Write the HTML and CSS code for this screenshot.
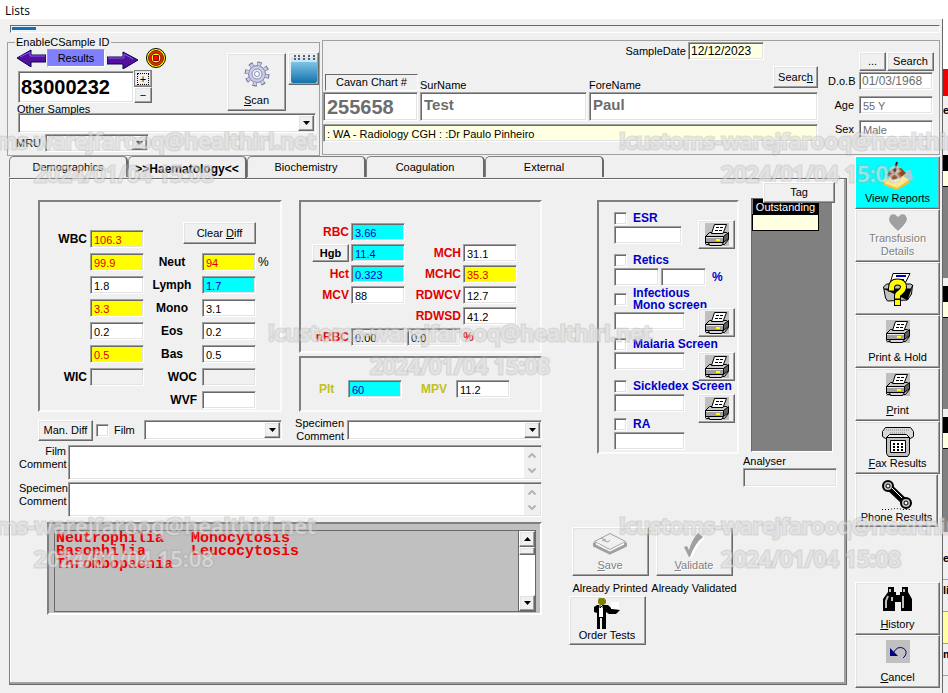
FILE: index.html
```html
<!DOCTYPE html>
<html lang="en">
<head>
<meta charset="utf-8">
<title>Lists</title>
<link rel="stylesheet" href="styles.css">
</head>
<body>
<svg class="defs" aria-hidden="true">
  <symbol id="printer" viewBox="0 0 24 23">
    <path fill="#c0c0c0" d="M0 0h24v23H0z"/>
    <path fill="#c8c8c8" stroke="#000" d="M4.500 9.500h17l2 2v5l-4 5h-18l-1-1v-7z"/>
    <path fill="#fff" stroke="#000" d="M9.500 1.500h12l-3.500 9h-11.500z"/>
    <path stroke="#000" d="M11 4.500h7M10 7.500h7" stroke-dasharray="3 1"/>
    <path fill="#a0a0a0" stroke="#000" d="M.5 13.500h18v6h-18z"/>
    <path fill="#e8e8e8" d="M1 14h17v1H1z"/>
    <path fill="#606060" stroke="#000" d="M18.500 13.500l5-4v6l-5 4z"/>
    <path fill="#d8d8d8" stroke="#000" d="M3.500 19.500h15l-2 3h-12z"/>
    <path fill="#ff0" d="M11 16h4v2h-4z"/>
  </symbol>
  <symbol id="down" viewBox="0 0 7 4"><path d="M0 0h7L3.500 4z"/></symbol>
  <symbol id="chev" viewBox="0 0 8 5"><path d="M0.500 4.500L4 1l3.500 3.500" fill="none" stroke="#b4b4b4" stroke-width="2"/></symbol>
</svg>

<header class="menubar">Lists</header>

<div class="screen">
  <div class="window">
    <div class="progress"><div class="progress-bar"></div></div>

    <div class="header">
      <fieldset class="frame sample">
        <legend>EnableCSample ID</legend>
        <div class="sample-top">
          <div class="sample-id">
            <div class="nav">
              <svg width="29" height="18" viewBox="0 0 29 18"><path d="M0 9L14 1v5h15v7H14v5z" fill="#52109c" stroke="#0a004c" stroke-width="1"/><path d="M3 8l10-5v4h15" fill="none" stroke="#8a5cff"/></svg>
              <span class="results">Results</span>
              <svg class="nav-right" width="31" height="18" viewBox="0 0 31 18"><path d="M31 9L16 1v5H0v7h16v5z" fill="#52109c" stroke="#0a004c" stroke-width="1"/><path d="M1 7h16V3l9 5" fill="none" stroke="#8a5cff"/></svg>
              <svg width="20" height="20" viewBox="0 0 20 20"><circle cx="10" cy="10" r="9.500" fill="#ff0" stroke="#000"/><circle cx="10" cy="10" r="7.500" fill="#e83000" stroke="#802000" stroke-width="1"/><circle cx="10" cy="10" r="5" fill="#ff0" stroke="#600"/><path d="M7.500 7.500h5v5h-5z" fill="#f00" stroke="#800"/></svg>
            </div>
            <div class="id-row">
              <input class="field id-input" aria-label="Sample ID" value="83000232">
              <div class="spin">
                <button class="btn"><span class="focus">+</span></button>
                <button class="btn">−</button>
              </div>
            </div>
            <label class="other" for="other">Other Samples</label>
          </div>
          <button class="btn stack scan">
            <svg width="26" height="26" viewBox="0 0 26 26"><circle cx="13" cy="13" r="10" fill="none" stroke="#6f7396" stroke-width="5" stroke-dasharray="4 3.850"/><circle cx="13" cy="13" r="8.500" fill="#c9cce4" stroke="#7a7ea4"/><circle cx="13" cy="13" r="10" fill="none" stroke="#c9cce4" stroke-width="3" stroke-dasharray="3 4.850" stroke-dashoffset="-.5"/><circle cx="13" cy="13" r="5" fill="#eef0fa" stroke="#8a8eb4"/><circle cx="13" cy="13" r="2.500" fill="#fff" stroke="#8a8eb4"/></svg>
            <span><u>S</u>can</span>
          </button>
          <button class="btn calendar" aria-label="Calendar">
            <svg width="28" height="30" viewBox="0 0 28 30"><defs><linearGradient id="blue" x2="0" y2="1"><stop offset="0" stop-color="#8ed0ee"/><stop offset="1" stop-color="#1272ac"/></linearGradient></defs><path fill="url(#blue)" d="M1 5h26v22q0 2-2 2H3q-2 0-2-2z"/><path fill="#c8e8f6" d="M1 3h26v5H1z"/><path d="M5 1v6M9 1v6M14 1v6M19 1v6M24 1v6" stroke="#56616a" stroke-width="2" stroke-dasharray="2 1"/></svg>
          </button>
        </div>
        <div class="combo other-combo"><select id="other"><option></option></select><span class="btn arrow"><svg width="7" height="4"><use href="#down"/></svg></span></div>
        <div class="mru"><label for="mru">MRU</label><div class="combo"><select id="mru"><option></option></select><span class="btn arrow"><svg width="7" height="4"><use href="#down"/></svg></span></div></div>
      </fieldset>

      <section class="frame patient">
        <div class="identity">
          <div class="date-row"><label for="sdate">SampleDate</label><input class="field cream date" id="sdate" value="12/12/2023"></div>
          <div class="names">
            <label class="chart-label" for="chart">Cavan Chart #</label>
            <label for="sur">SurName</label>
            <div class="fore-head"><label for="fore">ForeName</label><button class="btn">Searc<u>h</u></button></div>
            <input class="field chart" id="chart" value="255658">
            <input class="field name" id="sur" value="Test">
            <input class="field name" id="fore" value="Paul">
          </div>
          <input class="field cream ward" aria-label="Ward and clinician" value=": WA - Radiology CGH : :Dr Paulo Pinheiro">
        </div>
        <div class="demo">
          <div class="demo-buttons"><button class="btn">...</button><button class="btn">Search</button></div>
          <label for="dob">D.o.B</label><input class="field date" id="dob" value="01/03/1968">
          <label for="age">Age</label><input class="field" id="age" value="55 Y">
          <label for="sex">Sex</label><input class="field" id="sex" value="Male">
        </div>
      </section>
    </div>

    <div class="work">
      <main class="main">
        <nav class="tabs">
          <button class="tab">Demographics</button>
          <button class="tab selected">&gt;&gt;Haematology&lt;&lt;</button>
          <button class="tab">Biochemistry</button>
          <button class="tab">Coagulation</button>
          <button class="tab">External</button>
        </nav>
        <div class="panel">
          <div class="results-col">
            <div class="groups">
              <section class="group wbc">
                <div class="wbc-col">
                  <label for="wbc">WBC</label><input class="field high" id="wbc" value="106.3">
                  <input class="field high" aria-label="Neutrophils" value="99.9">
                  <input class="field" aria-label="Lymphocytes" value="1.8">
                  <input class="field high" aria-label="Monocytes" value="3.3">
                  <input class="field" aria-label="Eosinophils" value="0.2">
                  <input class="field high" aria-label="Basophils" value="0.5">
                  <label for="wic">WIC</label><input class="field grey" id="wic">
                </div>
                <div class="diff-col">
                  <button class="btn clear"><span>Clear <u>D</u>iff</span></button>
                  <label for="neut">Neut</label><input class="field high" id="neut" value="94"><span>%</span>
                  <label for="lymph">Lymph</label><input class="field low" id="lymph" value="1.7">
                  <label for="mono">Mono</label><input class="field" id="mono" value="3.1">
                  <label for="eos">Eos</label><input class="field" id="eos" value="0.2">
                  <label for="bas">Bas</label><input class="field" id="bas" value="0.5">
                  <label class="end" for="woc">WOC</label><input class="field grey" id="woc">
                  <label class="end" for="wvf">WVF</label><input class="field" id="wvf">
                </div>
              </section>
              <div class="red-col">
                <section class="group rbc">
                  <label for="rbc">RBC</label><input class="field low" id="rbc" value="3.66">
                  <button class="btn hgb">Hgb</button><input class="field low" aria-label="Hgb" value="11.4"><label for="mch">MCH</label><input class="field" id="mch" value="31.1">
                  <label class="c1" for="hct">Hct</label><input class="field low" id="hct" value="0.323"><label for="mchc">MCHC</label><input class="field high" id="mchc" value="35.3">
                  <label class="c1" for="mcv">MCV</label><input class="field" id="mcv" value="88"><label for="rdwcv">RDWCV</label><input class="field" id="rdwcv" value="12.7">
                  <label class="c3" for="rdwsd">RDWSD</label><input class="field" id="rdwsd" value="41.2">
                  <label class="c1" for="nrbc">nRBC</label><input class="field grey" id="nrbc" value="0.00"><input class="field grey" aria-label="nRBC percent" value="0.0"><span class="pct">%</span>
                </section>
                <section class="group plt">
                  <label for="plt">Plt</label><input class="field low" id="plt" value="60">
                  <label for="mpv">MPV</label><input class="field" id="mpv" value="11.2">
                </section>
              </div>
            </div>

            <div class="film-row">
              <button class="btn">Man. Diff</button>
              <label class="film"><input type="checkbox" class="check">Film</label>
              <div class="combo"><select aria-label="Film comment list"><option></option></select><span class="btn arrow"><svg width="7" height="4"><use href="#down"/></svg></span></div>
              <label class="two" for="spec">Specimen<br>Comment</label>
              <div class="combo wide"><select id="spec"><option></option></select><span class="btn arrow"><svg width="7" height="4"><use href="#down"/></svg></span></div>
            </div>
            <div class="comment"><label for="fc">Film<br>Comment</label><div class="memo"><textarea id="fc"></textarea><span class="scroll"><svg width="8" height="5"><use href="#chev"/></svg><svg class="flip" width="8" height="5"><use href="#chev"/></svg></span></div></div>
            <div class="comment"><label for="sc">Specimen<br>Comment</label><div class="memo"><textarea id="sc"></textarea><span class="scroll"><svg width="8" height="5"><use href="#chev"/></svg><svg class="flip" width="8" height="5"><use href="#chev"/></svg></span></div></div>

            <div class="flags">
              <div class="flags-inner">
                <ul class="flag-list"><li>Neutrophilia</li><li>Monocytosis</li><li>Basophilia</li><li>Leucocytosis</li><li>Thrombopaenia</li></ul>
                <div class="bar"><span class="btn"><svg class="flip" width="7" height="4"><use href="#down"/></svg></span><span class="btn thumb"></span><span class="track"></span><span class="btn"><svg width="7" height="4"><use href="#down"/></svg></span></div>
              </div>
            </div>
          </div>

          <div class="side-col">
            <div class="side-top">
              <section class="group tests">
                <div class="test esr"><label><input type="checkbox" class="check">ESR</label><input class="field" aria-label="ESR result"><button class="btn" aria-label="Print ESR"><svg width="24" height="23"><use href="#printer"/></svg></button></div>
                <div class="test retics"><label><input type="checkbox" class="check">Retics</label><span class="pair"><input class="field" aria-label="Retics count"><input class="field" aria-label="Retics percent"></span><b>%</b></div>
                <div class="test mono"><label><input type="checkbox" class="check">Infectious<br>Mono screen</label><input class="field" aria-label="Infectious mono result"><button class="btn" aria-label="Print infectious mono"><svg width="24" height="23"><use href="#printer"/></svg></button></div>
                <div class="test"><label><input type="checkbox" class="check">Malaria Screen</label><input class="field" aria-label="Malaria result"><button class="btn" aria-label="Print malaria"><svg width="24" height="23"><use href="#printer"/></svg></button></div>
                <div class="test sickle"><label><input type="checkbox" class="check">Sickledex Screen</label><input class="field" aria-label="Sickledex result"><button class="btn" aria-label="Print sickledex"><svg width="24" height="23"><use href="#printer"/></svg></button></div>
                <div class="test"><label><input type="checkbox" class="check">RA</label><input class="field" aria-label="RA result"></div>
              </section>
              <div class="tag-col">
                <button class="btn tag">Tag</button>
                <div class="outstanding"><table><tr><th>Outstanding</th></tr><tr><td></td></tr></table></div>
                <label for="analyser">Analyser</label>
                <input class="field grey" id="analyser">
              </div>
            </div>
            <div class="actions">
              <div class="action">
                <button class="btn stack" disabled><svg width="34" height="24" viewBox="0 0 34 24"><path fill="#fff" d="M2 10L18 2l15 8v5L18 23 2 15z"/><path fill="#f0f0f0" stroke="#a0a0a0" d="M1.500 9.500L17 1.500l15.500 8L17 17.500z"/><path fill="none" stroke="#a0a0a0" stroke-width="3" d="M1.500 10.500v3L17 21l15.500-7.500v-3"/><path fill="none" stroke="#f0f0f0" d="M3 11l14 8 14-8"/><path fill="none" stroke="#a0a0a0" d="M9 8l6 2 2-2M8 6l5 2"/></svg><span><u>S</u>ave</span></button>
                <span>Already Printed</span>
              </div>
              <div class="action">
                <button class="btn stack" disabled><svg width="22" height="26" viewBox="0 0 22 26"><path fill="#fff" d="M2 17l3-2 2 4Q11 8 17 2l5 4Q14 13 9 26H7z"/><path fill="#a0a0a0" d="M1 15l3-1 2 4Q9 7 15 1l5 4Q12 11 7 25H6z"/></svg><span><u>V</u>alidate</span></button>
                <span>Already Validated</span>
              </div>
              <button class="btn stack order"><svg width="28" height="31" viewBox="0 0 28 31"><path fill="#808000" d="M6 0h5l2 2v3l-2 2H7L5 5V2z"/><path fill="#000" d="M4 7h11l4 4 8 1-4 4h-7l-3-2v4H4v-3l-3-1V9zM4 18h3v13H4zM9 18h4v13H9zM7 18h2v2H7z"/><path fill="#fff" d="M6 7h4v12H6zM18 4h8v7h-8z"/><path d="M7 7v3l3-3v3" fill="none" stroke="#000"/></svg><span>Order Tests</span></button>
            </div>
          </div>
        </div>
      </main>

      <aside class="toolbar">
        <button class="btn stack cyan"><svg width="32" height="30" viewBox="0 0 32 30"><path fill="#a9c8d8" d="M17 11l12-2 2 9-7 4z"/><path fill="#ffe98a" d="M2 19l14-7 11 7-12 9-13-4z"/><path fill="#f4bf3d" d="M2 22l13 5 12-8v3l-12 7-13-5z"/><path fill="#fff7c8" d="M8 20l8-4 5 3-8 4z"/><path fill="#8c4a22" d="M5 14q3-8 14-7l5 5-6 5-8 2-2-3z"/><path fill="#c98552" d="M10 10q5-3 10 0l-6 4z"/><path stroke="#3a2010" stroke-width="2" d="M15 1l-3 12"/></svg><span>View Reports</span></button>
        <button class="btn stack" disabled><svg width="18" height="18" viewBox="0 0 18 18"><path fill="#fff" d="M10 18Q1 10 1 6q1-6 6-4l3 2 3-2q6-1 5 5-2 5-8 11z"/><path fill="#a0a0a0" d="M9 17Q0 9 0 5.500 1-1 6 .500L9 3l3-2.500q5-1.500 6 5Q17 10 9 17z"/></svg><span>Transfusion<br>Details</span></button>
        <button class="btn stack help" aria-label="Print help"><svg width="32" height="34" viewBox="0 0 32 34"><path fill="#c0c0c0" stroke="#000" d="M1.500 15l3-3h24l2 1-1 9-4 6-20 1-2-3z"/><path stroke="#000" d="M2 17h27l-4 11M29 17l2-4"/><path fill="#fff" stroke="#000" d="M11 1.500h17l-5 10H8z"/><path stroke="#0000c0" stroke-width="2" d="M14 4h10M12 8h10"/><g fill="none" stroke-linecap="square"><path stroke="#000" stroke-width="7" d="M9.500 16q0-6 6-6t6 5q0 3-4 6-2 1-2 3M15.500 30.500v.01"/><path stroke="#ff0" stroke-width="5" d="M9.500 16q0-6 6-6t6 5q0 3-4 6-2 1-2 3M15.500 30.500v.01"/></g></svg></button>
        <button class="btn stack"><svg width="24" height="23"><use href="#printer"/></svg><span>Print &amp; Hold</span></button>
        <button class="btn stack"><svg width="24" height="23"><use href="#printer"/></svg><span><u>P</u>rint</span></button>
        <button class="btn stack"><svg width="32" height="31" viewBox="0 0 32 31"><path fill="#c0c0c0" stroke="#000" d="M4.500 11.500h23v16l-2 3h-19l-2-3z"/><path fill="#d8d8d8" stroke="#000" d="M3.500 1.500h25l3 4v5l-3 2-4-4h-17l-4 4-3-2v-5z"/><path stroke="#888" d="M4 4h24M8 7h16" stroke-dasharray="1 1"/><path fill="#fff" stroke="#000" d="M8.500 14.500h15v12h-15z"/><path stroke="#000" stroke-width="2" stroke-dasharray="2 2" d="M11 18h10M11 21h10M11 24h10"/></svg><span><u>F</u>ax Results</span></button>
        <button class="btn stack narrow"><svg width="32" height="32" viewBox="0 0 32 32"><path stroke="#000" stroke-width="7" d="M7 7l18 17"/><circle cx="7" cy="7" r="5" fill="#c0c0c0" stroke="#000" stroke-width="2"/><circle cx="7" cy="7" r="2" fill="#fff" stroke="#000"/><circle cx="25" cy="24" r="5" fill="#c0c0c0" stroke="#000" stroke-width="2"/><circle cx="25" cy="24" r="2" fill="#fff" stroke="#000"/><path stroke="#fff" d="M11 9l10 10"/><path fill="none" stroke="#000" stroke-dasharray="1 2" d="M1 30.500h8q6-2 12 0h10"/></svg><span>Phone Results</span></button>
        <button class="btn stack gap"><svg width="30" height="24" viewBox="0 0 30 24"><path d="M5 0h6v5h2v3h4V5h2V0h6v5l4 7v12H18v-9h-6v9H0V12l5-7z"/><path stroke="#c0c0c0" stroke-width="2" d="M7 2v3M21 2v3M5 9l-2 5v7M20 9v12M9 10v4" fill="none"/></svg><span><u>H</u>istory</span></button>
        <button class="btn stack"><svg width="24" height="23" viewBox="0 0 24 23"><path fill="#c0c0c0" d="M0 0h24v23H0z"/><path fill="#000080" d="M4 8v8h8z"/><path d="M8 12q3-6 9-4 5 3 2 8l-2 2" fill="none" stroke="#000080" stroke-width="1"/></svg><span><u>C</u>ancel</span></button>
      </aside>
    </div>
  </div>

  <div class="behind">
    <span class="b-white"></span><span class="b-red"></span><span class="b-face">e</span>
    <span class="b-list"></span><span class="b-list"></span><span class="b-list last"></span>
    <span class="b-row">e</span><span class="b-row">li</span><span class="b-row yellow"></span><span class="b-row">m</span>
  </div>
</div>

<div class="marks" aria-hidden="true">
  <p class="mark top left">!customs-warejfarooq@healthirl.net<br>2024/01/04 15:08</p>
  <p class="mark top right">!customs-warejfarooq@healthirl.net<br>2024/01/04 15:08</p>
  <p class="mark middle">!customs-warejfarooq@healthirl.net<br>2024/01/04 15:08</p>
  <p class="mark bottom left">!customs-warejfarooq@healthirl.net<br>2024/01/04 15:08</p>
  <p class="mark bottom right">!customs-warejfarooq@healthirl.net<br>2024/01/04 15:08</p>
</div>
</body>
</html>
```
FILE: styles.css
```css
:root {
  --face: #f0f0f0;
  --shade: #a0a0a0;
  --dark: #696969;
  --light: #e3e3e3;
}
* { box-sizing: border-box; }
body {
  margin: 0;
  min-height: 100vh;
  display: flex;
  flex-direction: column;
  position: relative;
  overflow: hidden;
  background: var(--face);
  color: #000;
  font: 11px/13px "Liberation Sans", Arial, sans-serif;
}
button, input, select, textarea { font: inherit; color: inherit; margin: 0; border-radius: 0; }
svg { display: block; flex: none; }
.defs { position: absolute; width: 0; height: 0; }
.flip { transform: rotate(180deg); }

/* raised and sunken edges */
.btn {
  display: flex;
  align-items: center;
  justify-content: center;
  padding: 0;
  background: var(--face);
  border: 1px solid;
  border-color: #fff var(--dark) var(--dark) #fff;
  box-shadow: inset -1px -1px var(--shade), inset 1px 1px var(--light);
  white-space: nowrap;
}
.btn:disabled { color: #808080; text-shadow: 1px 1px #fff; }
.stack { flex-direction: column; justify-content: space-between; padding: 4px 2px 3px; }
.field, .combo, .memo {
  min-width: 0;
  background: #fff;
  border: 1px solid;
  border-color: var(--shade) #fff #fff var(--shade);
  box-shadow: inset 1px 1px var(--dark), inset -1px -1px var(--light);
}
.field { width: 100%; height: 18px; padding: 1px 3px 0; font-size: 11px; font-weight: normal; }
.high { background: #ff0; color: #e00000; }
.low { background: #0ff; color: #0000c0; }
.grey { background: var(--face); }
.cream { background: #ffffe1; }
.date { font-size: 12px; padding: 0 2px; }
.combo { display: flex; height: 20px; padding: 1px; }
.combo select { flex: 1; min-width: 0; border: 0; background: none; appearance: none; padding: 0 3px; }
.arrow { width: 16px; }
.check {
  appearance: none;
  flex: none;
  width: 13px;
  height: 13px;
  background: #fff;
  border: 1px solid;
  border-color: var(--shade) #fff #fff var(--shade);
  box-shadow: inset 1px 1px var(--dark), inset -1px -1px var(--light);
}
.frame { margin: 0; padding: 0; border: 1px solid var(--shade); min-width: 0; }
.group { border: 2px solid; border-color: #808080 #fbfbfb #fbfbfb #808080; }

.menubar { height: 19px; padding: 4px 5px; background: #fff; font: 12px/14px "Open Sans", sans-serif; }
.screen { flex: 1; display: flex; }
.window { flex: 1; min-width: 0; display: flex; flex-direction: column; padding: 6px 2px 5px 7px; border-right: 1px solid var(--dark); }
.progress { height: 8px; margin-left: 3px; padding: 1px; border: 1px solid; border-color: var(--dark) #fff #fff var(--dark); }
.progress-bar { width: 24px; height: 3px; background: #0b6fc4; }

.header { display: flex; gap: 2px; margin-top: 3px; height: 120px; }
.sample { width: 313px; padding: 0 3px 0 9px; }
.sample legend { padding: 0 1px; margin-left: -2px; line-height: 13px; }
.sample-top { display: flex; align-items: flex-start; gap: 2px; height: 64px; }
.sample-id { flex: 1; margin-top: -1px; }
.nav { display: flex; align-items: center; gap: 1px; height: 20px; }
.nav-right { margin: 3px 7px 0 1px; }
.results { width: 58px; height: 18px; line-height: 16px; text-align: center; background: #8080ff; border: 1px solid; border-color: var(--shade) #fff #fff var(--shade); }
.id-row { display: flex; margin: 3px 0 0 1px; }
.id-input { width: 116px; height: 32px; font-size: 20px; font-weight: bold; padding: 0 2px; }
.spin { width: 18px; }
.spin .btn { width: 100%; height: 16px; }
.spin .btn:first-child { height: 17px; margin-top: -1px; border-color: #808080; }
.focus { border: 1px dotted #000; width: 12px; line-height: 10px; }
.scan { width: 59px; height: 58px; margin-top: 4px; padding: 7px 0 3px; }
.calendar { width: 31px; height: 33px; margin: 3px -3px 0 0; }
.other { display: block; }
.other-combo { margin-left: 1px; }
.mru { display: flex; align-items: center; gap: 4px; margin: 1px 0 0 -1px; }
.mru .combo { width: 104px; height: 18px; background: #f6f6f6; }

.patient { flex: 1; display: flex; gap: 10px; margin-top: 4px; height: 115px; padding: 1px 6px 0 0; }
.identity { flex: 1; min-width: 0; display: flex; flex-direction: column; }
.date-row { display: flex; justify-content: flex-end; align-items: center; gap: 2px; padding-right: 54px; }
.date-row .date { width: 76px; }
.names { display: grid; grid-template-columns: 95px 167px 1fr; column-gap: 2px; align-items: end; margin-top: 6px; }
.chart-label { margin-left: 2px; margin-bottom: 1px; height: 17px; text-align: center; border: 1px solid; border-color: var(--dark) #fff #fff var(--dark); line-height: 15px; }
.fore-head { display: flex; justify-content: space-between; align-items: flex-end; }
.fore-head .btn { width: 45px; height: 22px; margin-bottom: 4px; }
.names .field { height: 29px; color: #6d6d6d; font-weight: bold; font-size: 15px; }
.names .name { padding-bottom: 6px; }
.names .chart { font-size: 20px; }
.ward { margin-top: 3px; }
.demo { width: 105px; display: grid; grid-template-columns: 26px 1fr; column-gap: 5px; row-gap: 6px; align-content: start; align-items: center; padding-top: 10px; }
.demo label { text-align: right; }
.demo .field { color: #6d6d6d; }
.demo-buttons { grid-column: 2; display: flex; gap: 1px; margin-bottom: -5px; }
.demo-buttons .btn { width: 27px; height: 19px; }
.demo-buttons .btn + .btn { width: 47px; margin-right: -2px; flex: none; }

.work { flex: 1; display: flex; gap: 8px; padding-left: 2px; }
.main { flex: 1; min-width: 0; display: flex; flex-direction: column; padding-bottom: 3px; }
.tabs { display: flex; height: 22px; align-items: flex-start; }
.tab { width: 119px; height: 21px; background: var(--face); border: 1px solid #808080; border-right: 2px solid var(--dark); border-bottom: 0; border-radius: 5px 5px 0 0; padding: 0; }
.tab.selected { font-weight: bold; font-size: 12px; height: 24px; padding-top: 2px; }
.panel { flex: 1; display: flex; border: 1px solid; border-color: var(--dark) var(--dark) var(--dark) #808080; box-shadow: inset -2px -2px var(--shade), inset 1px 1px #fff; padding: 3px 9px 0; }
.results-col { width: 523px; padding-top: 18px; }
.groups { display: flex; gap: 17px; margin-left: 19px; }
.wbc { width: 244px; height: 212px; display: flex; font-size: 12px; }
.wbc-col, .diff-col { display: grid; grid-auto-rows: 18px; row-gap: 5px; align-content: start; align-items: center; }
.wbc-col { grid-template-columns: 47px 54px; column-gap: 3px; padding-top: 28px; }
.wbc-col label, .diff-col label, .rbc label, .plt label { font-weight: bold; }
.wbc-col label { text-align: right; }
.wbc-col .field { grid-column: 2; }
.diff-col { grid-template-columns: 56px 54px 14px; column-gap: 2px; padding-top: 28px; }
.diff-col label { grid-column: 1; text-align: center; }
.diff-col .end { text-align: right; padding-right: 3px; }
.clear { grid-column: 1 / 3; justify-self: end; align-self: end; width: 73px; height: 22px; font-size: 11px; margin-bottom: 4px; }
.red-col { flex: 1; display: flex; flex-direction: column; gap: 3px; }
.rbc { height: 153px; display: grid; grid-template-columns: 48px 54px 54px 54px; column-gap: 2px; grid-auto-rows: 18px; row-gap: 3px; align-content: start; align-items: center; padding-top: 21px; font-size: 12px; color: #e00000; }
.rbc label { text-align: right; }
.rbc .field:not(.low):not(.high), .plt .field:not(.low) { color: #000; }
.rbc .c1 { grid-column: 1; }
.rbc .c3 { grid-column: 3; }
.hgb { grid-column: 1; justify-self: end; width: 37px; height: 18px; color: #000; font-weight: bold; font-size: 11px; }
.pct { font-weight: bold; }
.plt { height: 56px; display: flex; align-items: center; padding: 10px 30px 0 18px; color: #c0c020; font-size: 12px; }
.plt .field { width: 54px; }
.plt label { width: 29px; }
.plt label + .field + label { width: 35px; margin-left: 19px; }

.film-row { display: flex; align-items: center; margin: 6px 0 3px 19px; height: 24px; }
.film-row > .btn { width: 55px; height: 21px; }
.film { display: flex; align-items: center; gap: 5px; margin-left: 3px; width: 48px; }
.film-row .combo { width: 138px; }
.film-row .two { width: 65px; text-align: right; padding-right: 3px; }
.film-row .combo.wide { width: auto; flex: 1; }
.comment { display: flex; gap: 2px; margin-bottom: 2px; }
.comment label { width: 47px; text-align: right; }
.memo { flex: 1; display: flex; height: 35px; padding: 1px; }
.memo textarea { flex: 1; border: 0; resize: none; background: none; }
.scroll { width: 16px; background: var(--face); display: flex; flex-direction: column; align-items: center; justify-content: space-between; padding: 6px 0 5px; }
.flags { height: 93px; margin: 5px 0 0 28px; padding: 6px 4px 3px 5px; background: #c0c0c0; border: 2px solid; border-color: #808080 #fff #fff #808080; }
.flags-inner { height: 82px; display: flex; border: 1px solid var(--dark); }
.flag-list { flex: 1; margin: 0; padding: 1px; list-style: none; display: grid; grid-template-columns: 135px 1fr; align-content: start; color: #f00000; font: bold 15px/13px "Liberation Mono", monospace; }
.bar { width: 17px; display: flex; flex-direction: column; background: #fff; border-left: 1px solid var(--dark); }
.bar .btn { height: 16px; }
.bar .thumb { height: 8px; }
.track { flex: 1; }

.side-col { flex: 1; display: flex; flex-direction: column; }
.side-top { display: flex; gap: 4px; margin-left: 55px; }
.tests { flex: none; width: 142px; height: 254px; margin-top: 18px; padding: 10px 0 0 15px; font-weight: bold; font-size: 12px; color: #0000c8; }
.test { display: grid; grid-template-columns: 84px 37px; grid-template-rows: auto 18px; height: 42px; row-gap: 1px; align-content: start; }
.test label { grid-column: 1 / 3; display: flex; align-items: center; gap: 6px; height: 13px; white-space: nowrap; }
.test .field { width: 71px; }
.test .btn { width: 37px; height: 29px; }
.test.esr .field { width: 68px; }
.test.esr .btn { margin-top: -6px; }
.test.retics { height: 33px; grid-template-columns: 98px 1fr; }
.test.retics b { align-self: center; }
.pair { display: flex; gap: 2px; width: 92px; }
.test.mono { height: 51px; }
.test.mono label { height: 24px; line-height: 12px; }
.test.mono .btn { margin-top: -4px; }
.test.sickle { height: 38px; }
.tag-col { flex: 1; display: flex; flex-direction: column; }
.tag { width: 72px; height: 21px; align-self: flex-end; margin-right: 2px; z-index: 1; }
.outstanding { height: 254px; width: 82px; margin: -5px 4px 3px 8px; background: #808080; border: 1px solid; border-color: var(--dark) #fff #fff var(--dark); }
.outstanding table { width: 67px; border-collapse: collapse; }
.outstanding th { padding: 0; height: 15px; background: #000; color: #fff; font-weight: normal; vertical-align: bottom; }
.outstanding td { height: 16px; padding: 0; background: #ffffe1; border: 1px solid #000; }
.tag-col .field { height: 19px; }
.actions { display: grid; grid-template-columns: 80px 84px; column-gap: 2px; justify-items: center; margin: 40px 0 0 28px; row-gap: 1px; }
.action { display: flex; flex-direction: column; align-items: center; gap: 6px; white-space: nowrap; }
.actions .btn { width: 77px; height: 49px; }
.actions .order { margin-left: -6px; padding-top: 1px; }

.toolbar { width: 85px; display: flex; flex-direction: column; }
.toolbar .btn { height: 53px; }
.toolbar .help { justify-content: center; }
.toolbar .narrow { width: 83px; }
.toolbar .gap { margin-top: 55px; }
.toolbar .cyan { background: #0ff; box-shadow: inset -1px -1px var(--shade); }

.behind { width: 5px; display: flex; flex-direction: column; overflow: hidden; background: var(--face); font-weight: bold; }
.b-white { height: 50px; background: #fff; }
.b-red { height: 27px; background: #f00000; }
.b-face { height: 59px; padding-top: 8px; }
.b-list { height: 123px; margin-bottom: 8px; background: linear-gradient(#000 16px, #ffffe1 16px 31px, #000 31px 32px, #808080 32px); }
.b-list.last { height: 115px; }
.b-row { height: 32px; padding-top: 4px; border-bottom: 1px solid var(--shade); }
.b-row:nth-of-type(7) { margin-top: 8px; }
.b-row.yellow { background: #ffffa0; }

/* user and time stamp laid over the whole window */
.marks { position: absolute; inset: 0; overflow: hidden; pointer-events: none; }
.mark {
  position: absolute;
  margin: 0;
  width: 400px;
  text-align: center;
  white-space: nowrap;
  font: 600 22px/33px "Open Sans", sans-serif;
  color: rgba(240, 240, 240, .5);
  -webkit-text-stroke: 3px rgba(170, 170, 170, .35);
  paint-order: stroke;
}
.top { top: 124px; }
.middle { top: 316px; left: 260px; }
.bottom { top: 509px; }
.left { left: -76px; }
.right { left: 611px; }
```
